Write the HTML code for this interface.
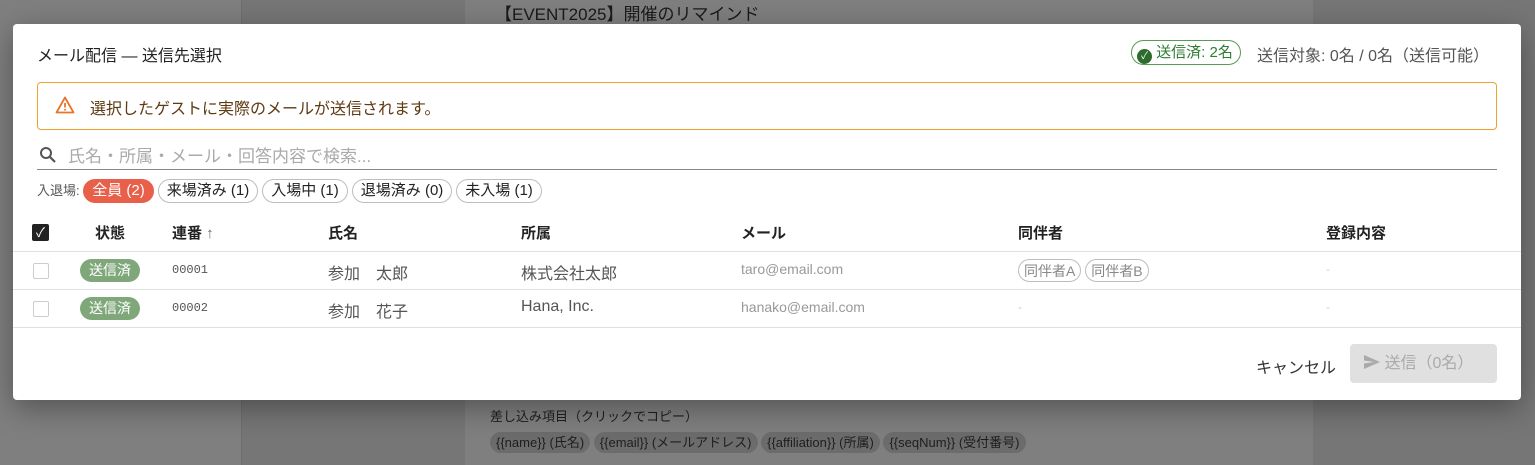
<!DOCTYPE html>
<html><head><meta charset="utf-8"><style>
*{box-sizing:border-box;margin:0;padding:0}
body{width:1535px;height:465px;overflow:hidden;position:relative;background:#767676;font-family:"Liberation Sans","Noto Sans CJK JP",sans-serif;color:#222}
.sb{position:absolute;left:0;top:0;width:242px;height:465px;background:#7f7f7f;border-right:1px solid #6e6e6e}
.card{position:absolute;left:465px;top:0;width:848px;height:465px;background:#7f7f7f}
.dlg{position:absolute;left:13px;top:24px;width:1508px;height:376px;background:#fff;border-radius:4px;box-shadow:0 8px 30px rgba(0,0,0,.35)}
.abs{position:absolute;white-space:nowrap}
.chip{display:inline-block;height:24px;line-height:22px;border:1px solid #bdbdbd;border-radius:12px;padding:0 8px;font-size:15px;color:#222;margin-right:4px}
.th{position:absolute;top:198px;font-size:15px;font-weight:bold;color:#222}
.cb{position:absolute;width:16px;height:16px;border:1.5px solid #ccc;border-radius:2px}
.tag{position:absolute;width:60px;height:23px;border-radius:12px;background:#7fa77a;color:#fff;font-size:14px;text-align:center;line-height:23px}
.td{position:absolute;font-size:15px;color:#555;white-space:nowrap}
.line{position:absolute;left:0;width:1508px;height:1px;background:#e0e0e0}
</style></head><body>
<div class="sb"></div>
<div class="card"><div class="abs" style="left:30px;top:0;font-size:17px;color:#1a1a1a">【EVENT2025】開催のリマインド</div>
<div class="abs" style="left:25px;top:406px;font-size:13px;color:#1e1e1e">差し込み項目（クリックでコピー）</div>
<div class="abs" style="left:25px;top:432px;font-size:13px;color:#1e1e1e">
<span style="background:#6c6c6c;border-radius:12px;padding:3px 6px">{{name}} (氏名)</span>
<span style="background:#6c6c6c;border-radius:12px;padding:3px 6px">{{email}} (メールアドレス)</span>
<span style="background:#6c6c6c;border-radius:12px;padding:3px 6px">{{affiliation}} (所属)</span>
<span style="background:#6c6c6c;border-radius:12px;padding:3px 6px">{{seqNum}} (受付番号)</span></div></div>
<div class="dlg">
<div class="abs" style="left:24px;top:18px;font-size:16px">メール配信 — 送信先選択</div>
<div class="abs" style="left:1118px;top:16px;width:110px;height:25px;border:1px solid #5a9a55;border-radius:13px;padding:0 0 0 5px;font-size:15px;line-height:23px;color:#2e7d32"><span style="display:inline-block;width:15px;height:15px;border-radius:50%;background:#2e6b2e;color:#fff;font-size:10px;line-height:15px;text-align:center;vertical-align:-2px">✓</span> 送信済: 2名</div>
<div class="abs" style="left:1244px;top:18px;font-size:16px;color:#555">送信対象: 0名 / 0名（送信可能）</div>
<div class="abs" style="left:24px;top:58px;width:1460px;height:48px;border:1px solid #f0a030;border-radius:4px"></div>
<svg class="abs" style="left:42px;top:72px" width="20" height="18" viewBox="0 0 20 18"><path d="M10 1.5L1.5 16.5h17z" fill="none" stroke="#e8742a" stroke-width="1.8" stroke-linejoin="round"/><path d="M10 7v4.5M10 13v1.5" stroke="#e8742a" stroke-width="1.8"/></svg>
<div class="abs" style="left:77px;top:71px;font-size:16px;color:#5f3a12">選択したゲストに実際のメールが送信されます。</div>
<svg class="abs" style="left:26px;top:122px" width="18" height="18" viewBox="0 0 18 18"><circle cx="7" cy="7" r="5" fill="none" stroke="#555" stroke-width="2"/><path d="M10.5 10.5l5.5 5.5" stroke="#555" stroke-width="2.2"/></svg>
<div class="abs" style="left:55px;top:118px;font-size:17px;color:#aaa">氏名・所属・メール・回答内容で検索...</div>
<div class="abs" style="left:24px;top:145px;width:1460px;height:1px;background:#888"></div>
<div class="abs" style="left:24px;top:155px;font-size:13px;color:#555;line-height:24px">入退場: <span class="chip" style="background:#e8604a;border-color:#e8604a;color:#fff">全員 (2)</span><span class="chip">来場済み (1)</span><span class="chip">入場中 (1)</span><span class="chip">退場済み (0)</span><span class="chip">未入場 (1)</span></div>
<div class="abs" style="left:19px;top:200px;width:17px;height:17px;background:#222;border-radius:2px;color:#fff;font-size:13px;line-height:17px;text-align:center">✓</div>
<div class="th" style="left:82px">状態</div>
<div class="th" style="left:159px">連番 <span style="font-weight:normal;color:#666">↑</span></div>
<div class="th" style="left:315px">氏名</div>
<div class="th" style="left:508px">所属</div>
<div class="th" style="left:728px">メール</div>
<div class="th" style="left:1005px">同伴者</div>
<div class="th" style="left:1313px">登録内容</div>
<div class="line" style="top:227px"></div>
<div class="line" style="top:265px"></div>
<div class="line" style="top:303px"></div>
<div class="cb" style="left:20px;top:239px"></div>
<div class="cb" style="left:20px;top:277px"></div>
<div class="tag" style="left:67px;top:235px">送信済</div>
<div class="tag" style="left:67px;top:273px">送信済</div>
<div class="td" style="left:159px;top:239px;font-family:'Liberation Mono',monospace;font-size:12px">00001</div>
<div class="td" style="left:159px;top:277px;font-family:'Liberation Mono',monospace;font-size:12px">00002</div>
<div class="td" style="left:315px;top:236px;font-size:16px">参加　太郎</div>
<div class="td" style="left:315px;top:274px;font-size:16px">参加　花子</div>
<div class="td" style="left:508px;top:236px;font-size:16px">株式会社太郎</div>
<div class="td" style="left:508px;top:274px;font-size:16px">Hana, Inc.</div>
<div class="td" style="left:728px;top:237px;font-size:14px;color:#999">taro@email.com</div>
<div class="td" style="left:728px;top:275px;font-size:14px;color:#999">hanako@email.com</div>
<div class="abs" style="left:1005px;top:235px;font-size:14px;color:#888"><span class="chip" style="color:#888;font-size:14px;height:23px;padding:0 5px;margin-right:0">同伴者A</span> <span class="chip" style="color:#888;font-size:14px;height:23px;padding:0 5px">同伴者B</span></div>
<div class="td" style="left:1005px;top:276px;color:#ccc;font-size:12px">-</div>
<div class="td" style="left:1313px;top:238px;color:#ccc;font-size:12px">-</div>
<div class="td" style="left:1313px;top:276px;color:#ccc;font-size:12px">-</div>
<div class="abs" style="left:1243px;top:330px;font-size:16px;color:#333">キャンセル</div>
<div class="abs" style="left:1337px;top:320px;width:147px;height:39px;background:#e0e0e0;border-radius:4px;font-size:16px;color:#aaa;line-height:39px;padding-left:14px"><svg width="16" height="14" viewBox="0 0 16 14" style="vertical-align:-1px"><path d="M0 0L16 7L0 14L0 8.5L10 7L0 5.5z" fill="#aaa"/></svg> 送信（0名）</div>
</div>
</body></html>
